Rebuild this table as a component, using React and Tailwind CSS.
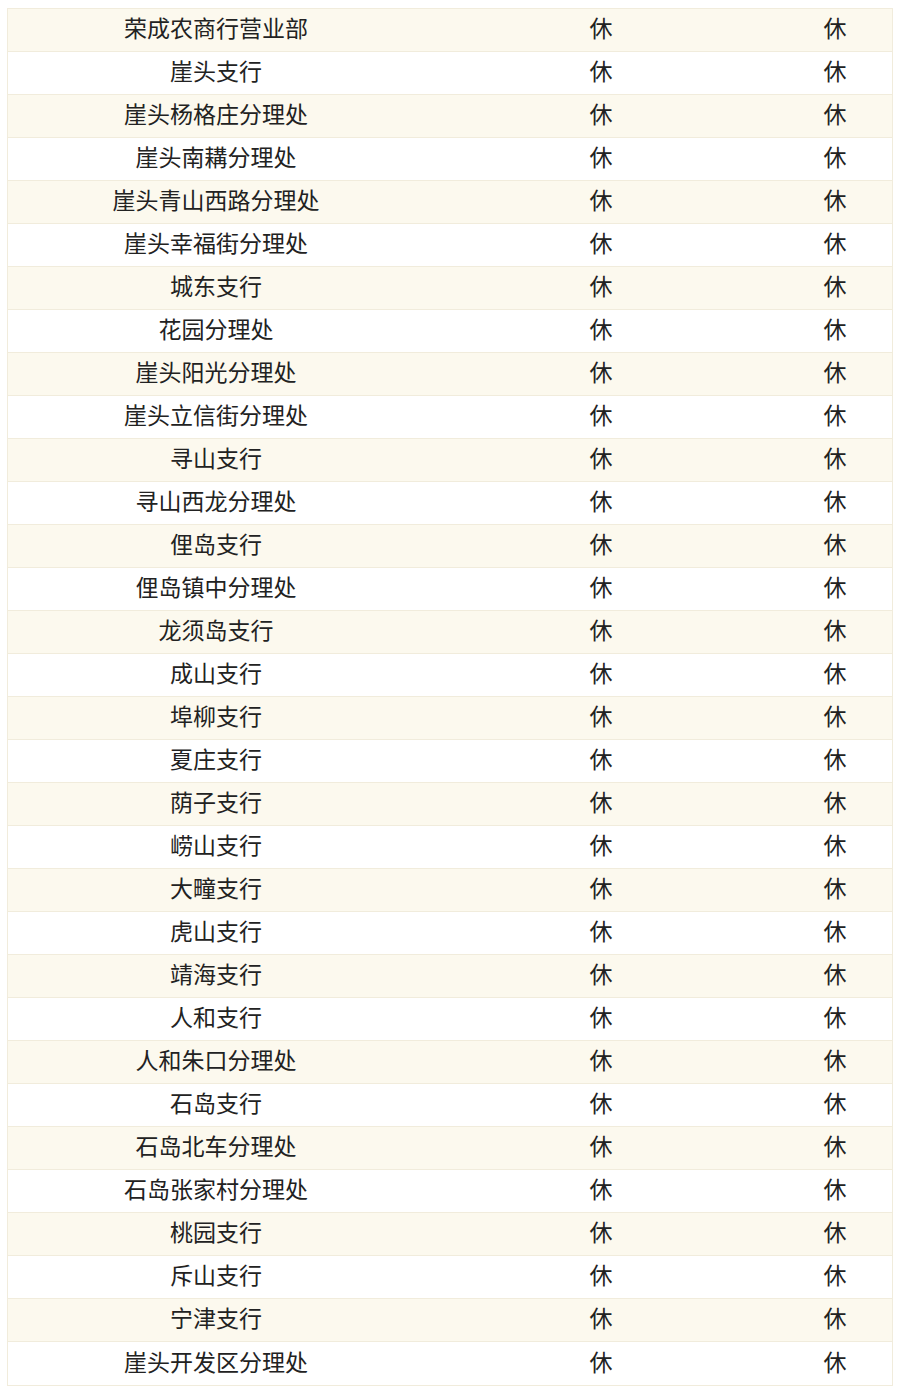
import React from 'react';

const rows = [
  '荣成农商行营业部', '崖头支行', '崖头杨格庄分理处', '崖头南耩分理处', '崖头青山西路分理处',
  '崖头幸福街分理处', '城东支行', '花园分理处', '崖头阳光分理处', '崖头立信街分理处',
  '寻山支行', '寻山西龙分理处', '俚岛支行', '俚岛镇中分理处', '龙须岛支行', '成山支行',
  '埠柳支行', '夏庄支行', '荫子支行', '崂山支行', '大疃支行', '虎山支行', '靖海支行',
  '人和支行', '人和朱口分理处', '石岛支行', '石岛北车分理处', '石岛张家村分理处',
  '桃园支行', '斥山支行', '宁津支行', '崖头开发区分理处',
];

export default function App() {
  return (
    <div className="w-[900px] h-[1390px] bg-white pt-[8px] px-[7px] font-['Noto_Sans_CJK_SC',sans-serif] text-[23px] text-[#222]">
      <div className="border border-[#f1ecdc]">
        {rows.map((name, i) => (
          <div
            key={name}
            className={`grid grid-cols-[416px_354px_1fr] h-[43px] items-center pb-[5px] border-b border-[#f1ecdc] last:border-b-0 ${i % 2 === 0 ? 'bg-[#fcf9ee]' : 'bg-white'}`}
          >
            <div className="text-center leading-none">{name}</div>
            <div className="text-center leading-none">休</div>
            <div className="text-center leading-none">休</div>
          </div>
        ))}
      </div>
    </div>
  );
}
